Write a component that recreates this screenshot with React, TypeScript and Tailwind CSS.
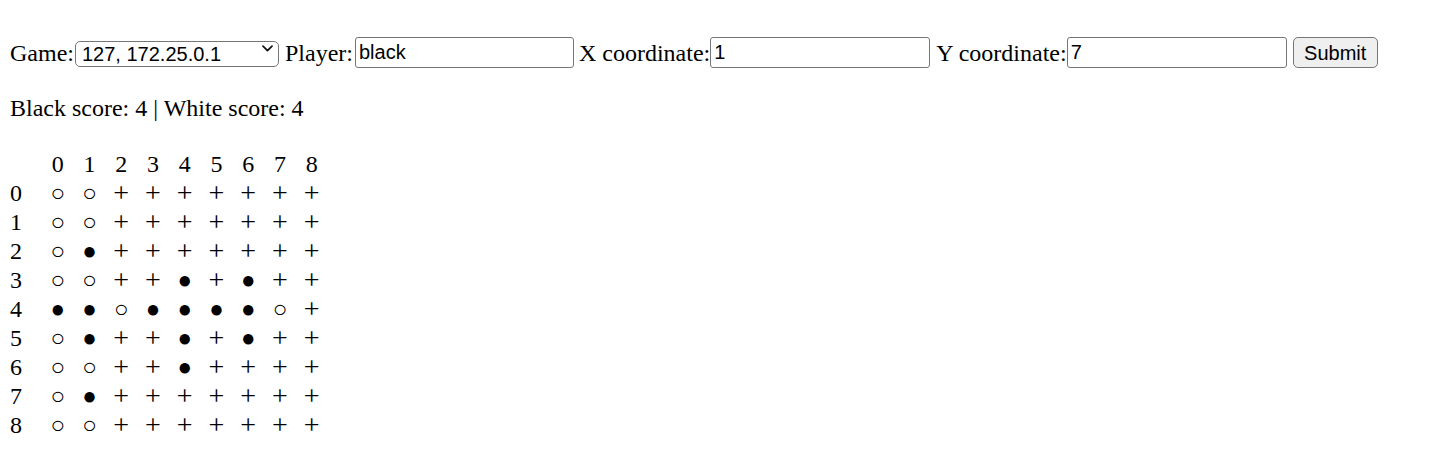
import React from "react";

const board = [
  "○○+++++++",
  "○○+++++++",
  "○●+++++++",
  "○○++●+●++",
  "●●○●●●●○+",
  "○●++●+●++",
  "○○++●++++",
  "○●+++++++",
  "○○+++++++",
];

const serif = "font-['Liberation_Serif','Times_New_Roman',serif]";
const sans = "font-['Liberation_Sans',Arial,sans-serif]";

function Field({ value, className }: { value: string; className: string }) {
  return (
    <input
      readOnly
      value={value}
      className={`h-[31px] ${className} rounded-[3px] border border-[#767676] bg-white pl-[3px] ${sans} text-[20px] text-black outline-none`}
    />
  );
}

export default function App() {
  return (
    <div className={`min-h-[467px] bg-white pl-[10px] pt-[37px] ${serif} text-[24px] text-black`}>
      <form className="flex h-[31px] items-center whitespace-pre" onSubmit={(e) => e.preventDefault()}>
        <span>Game:</span>
        <div className="relative ml-[1px]">
          <select
            className={`h-[26px] w-[204px] appearance-none rounded-[5px] border border-[#767676] bg-white pl-[6px] ${sans} text-[20px] leading-[24px] text-black outline-none`}
            defaultValue="127"
          >
            <option value="127">127, 172.25.0.1</option>
          </select>
          <svg
            className="pointer-events-none absolute right-[6px] top-[10px]"
            width="11"
            height="7"
            viewBox="0 0 11 7"
            fill="none"
          >
            <path d="M1 1.2 L5.5 5.6 L10 1.2" stroke="#111" strokeWidth="1.7" strokeLinecap="round" strokeLinejoin="round" />
          </svg>
        </div>
        <span className="ml-[6px]">Player:</span>
        <Field value="black" className="ml-[2px] w-[219px]" />
        <span className="ml-[5px]">X coordinate:</span>
        <Field value="1" className="w-[220px]" />
        <span className="ml-[6px]">Y coordinate:</span>
        <Field value="7" className="w-[220px]" />
        <button
          type="submit"
          className={`ml-[6px] h-[31px] w-[85px] rounded-[5px] border border-[#767676] bg-[#efefef] ${sans} text-[20px] text-black`}
        >
          Submit
        </button>
      </form>

      <p className="mt-[27px] h-[27px] leading-[27px]">Black score: 4 | White score: 4</p>

      <div className="mt-[27px] grid grid-cols-[repeat(10,31.75px)]">
        <div className="h-[29px]" />
        {Array.from({ length: 9 }, (_, i) => (
          <div key={`h${i}`} className="flex h-[29px] items-center justify-center">
            {i}
          </div>
        ))}
        {board.map((row, r) => (
          <React.Fragment key={r}>
            <div className="flex h-[29px] items-center">{r}</div>
            {row.split("").map((cell, c) => (
              <div
                key={c}
                className={`flex h-[29px] items-center justify-center ${cell === "+" ? "text-[28px]" : ""}`}
              >
                {cell}
              </div>
            ))}
          </React.Fragment>
        ))}
      </div>
    </div>
  );
}
